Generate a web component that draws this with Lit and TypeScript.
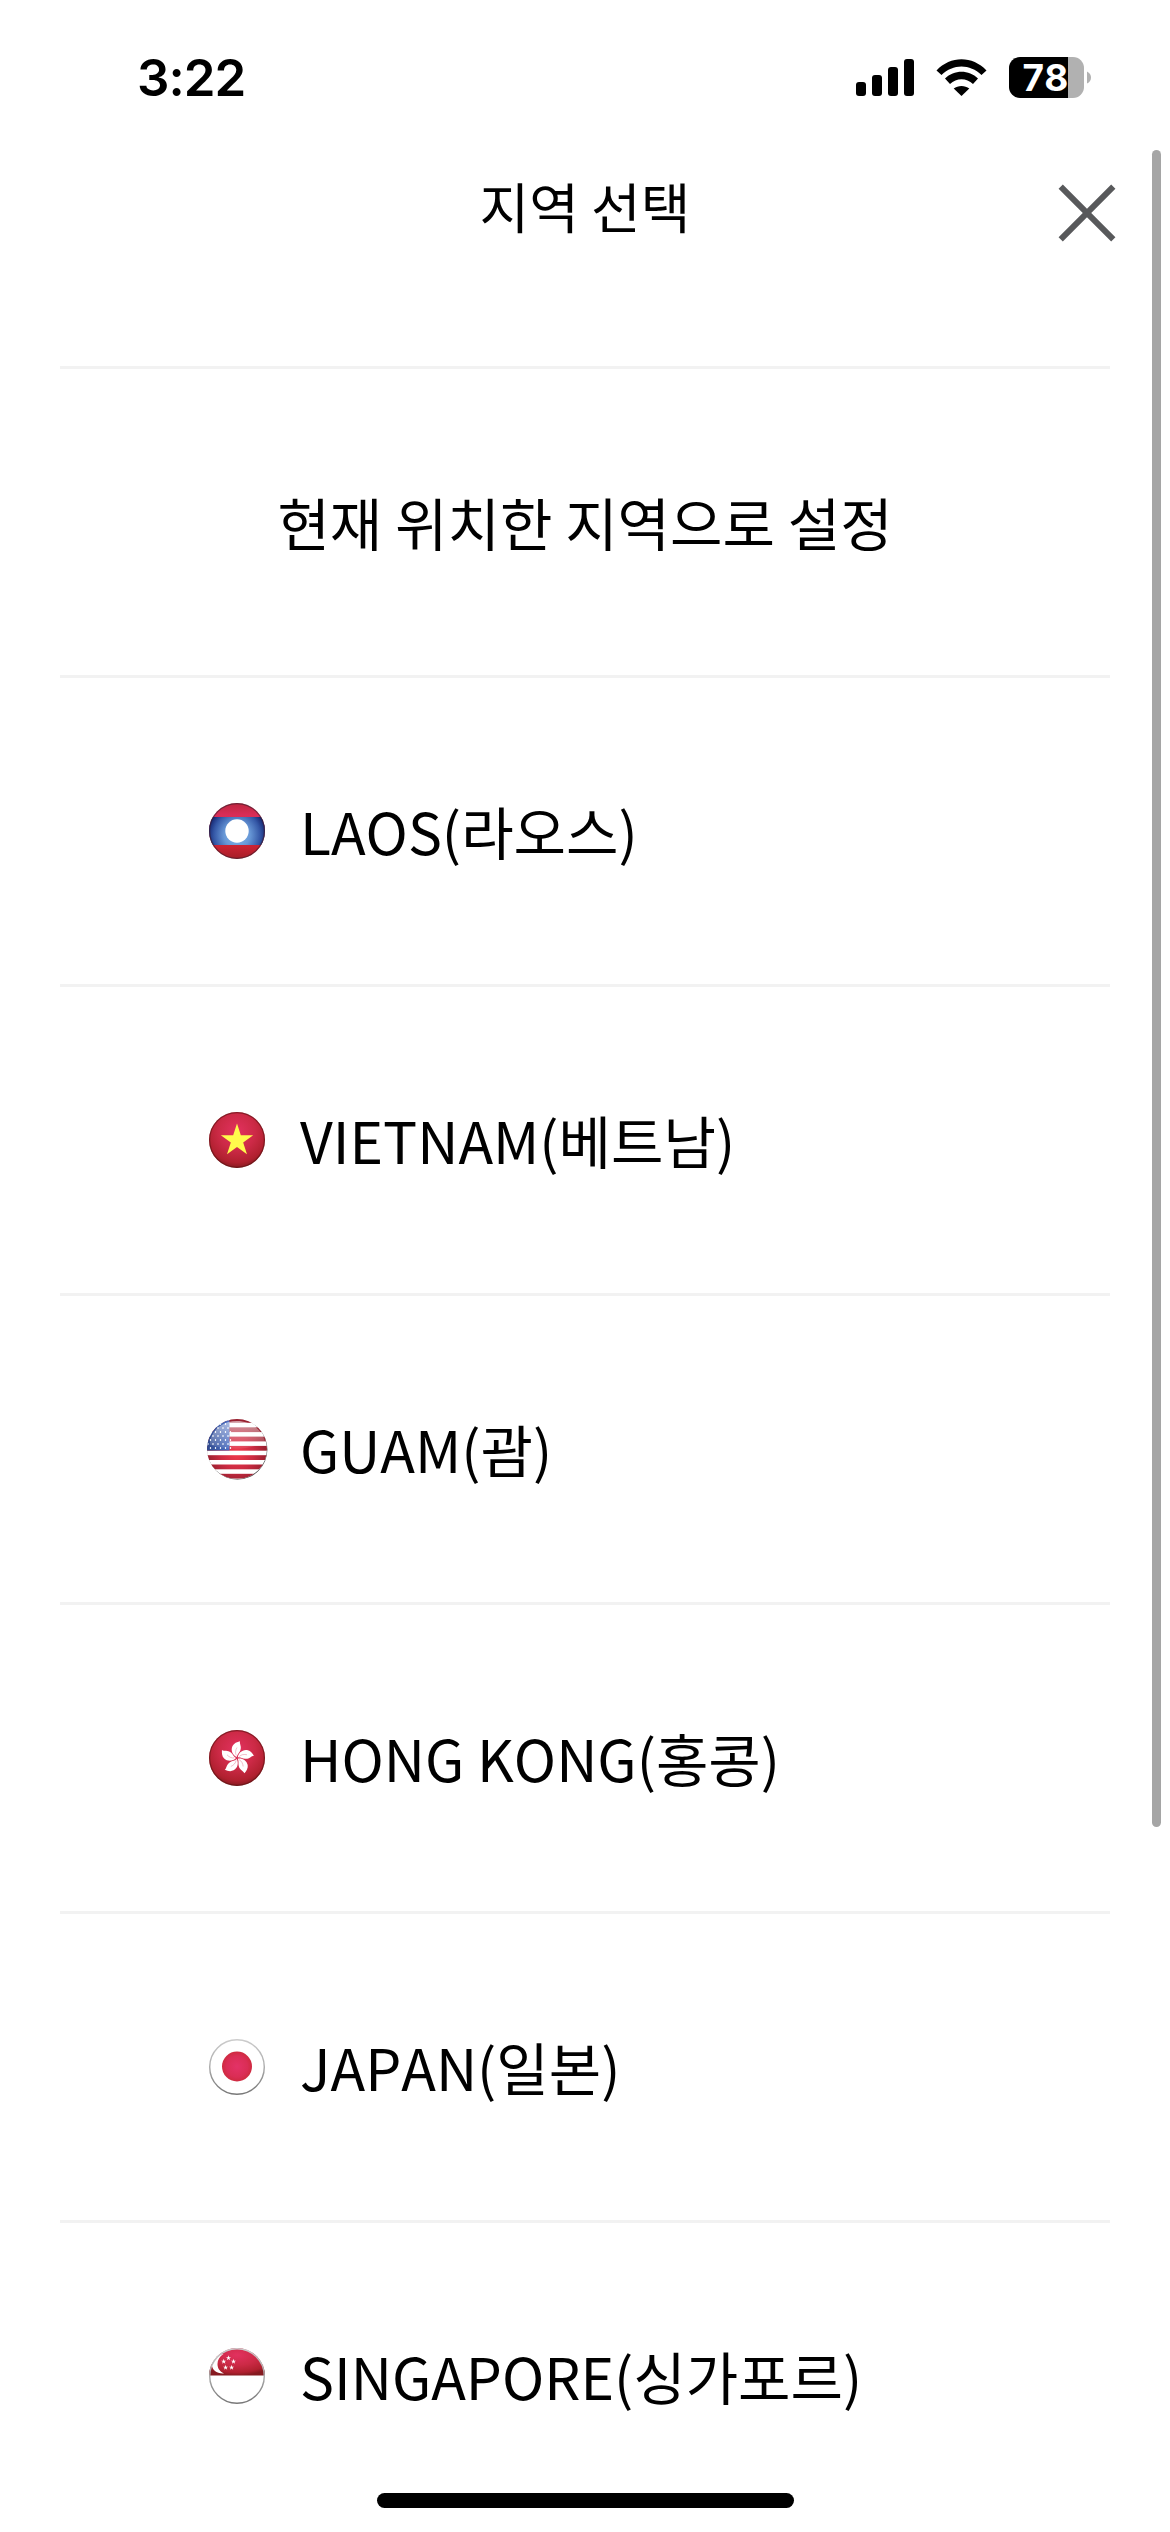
import { LitElement, html, css, svg, TemplateResult } from "lit";
import { customElement, property } from "lit/decorators.js";

type FlagCode = "la" | "vn" | "us" | "hk" | "jp" | "sg";

interface Region {
  code: FlagCode;
  name: string;
}

const REGIONS: Region[] = [
  { code: "la", name: "LAOS(라오스)" },
  { code: "vn", name: "VIETNAM(베트남)" },
  { code: "us", name: "GUAM(괌)" },
  { code: "hk", name: "HONG KONG(홍콩)" },
  { code: "jp", name: "JAPAN(일본)" },
  { code: "sg", name: "SINGAPORE(싱가포르)" },
];

const starPoints = (cx: number, cy: number, r: number): string =>
  Array.from({ length: 10 }, (_, i) => {
    const radius = i % 2 ? r * 0.382 : r;
    const angle = (Math.PI / 5) * i - Math.PI / 2;
    return `${(cx + radius * Math.cos(angle)).toFixed(2)},${(cy + radius * Math.sin(angle)).toFixed(2)}`;
  }).join(" ");

const redBall = svg`<circle cx="32" cy="32" r="28" fill="url(#red)"/>`;

// Every flag is a ball in the middle of a 64 by 64 box.
const FLAGS: Record<FlagCode, () => TemplateResult> = {
  la: () => svg`
    <g clip-path="url(#ball)">
      <rect width="64" height="64" fill="url(#redv)"/>
      <rect y="18" width="64" height="28" fill="url(#blue)"/>
    </g>
    <circle cx="32" cy="32" r="11.7" fill="#fff"/>
    <circle cx="32" cy="32" r="27.4" fill="none" stroke="#3c1c2c" stroke-opacity=".6" stroke-width="1.2"/>`,
  vn: () => svg`
    ${redBall}
    <polygon points="${starPoints(32, 32.5, 17)}" fill="#fffb4c"/>
    <circle cx="32" cy="32" r="27.4" fill="none" stroke="#5a1010" stroke-opacity=".6" stroke-width="1.2"/>`,
  us: () => svg`
    <circle cx="32.4" cy="32.6" r="30" fill="#444"/>
    <g clip-path="url(#bigball)">
      <rect width="64" height="64" fill="#fff"/>
      ${Array.from({ length: 7 }, (_, i) => svg`<rect y="${1 + i * 9.3}" width="64" height="4.8" fill="url(#stripe)"/>`)}
      <rect width="24.5" height="33.5" fill="url(#canton)"/>
      ${Array.from({ length: 8 }, (_, r) =>
        Array.from({ length: 5 }, (_, c) => svg`<ellipse cx="${3 + c * 5 + (r % 2) * 2.5}" cy="${3 + r * 4}" rx=".7" ry="1.1" fill="#fff"/>`)
      )}
      <path d="M5 24C8 11 19 4 32 4s25 8 28 21C44 34 22 33 5 28z" fill="url(#gloss)"/>
    </g>`,
  hk: () => svg`
    ${redBall}
    ${[0, 72, 144, 216, 288].map(
      (a) => svg`
      <g transform="rotate(${a} 32 32)">
        <path d="M31.7 31C28 29.5 25.3 24.5 27.5 20C29 17 32 16 35 15.2C34.3 18 37 20.5 35.3 24.5C34 27.5 32.3 28 31.7 31Z" fill="#fff"/>
        <path d="M31.3 29.5C30 27 30.5 24 32 21.5" fill="none" stroke="#d12d55" stroke-opacity=".4" stroke-width=".7"/>
      </g>`
    )}
    <circle cx="32" cy="32" r="27.4" fill="none" stroke="#5a1010" stroke-opacity=".6" stroke-width="1.2"/>`,
  jp: () => svg`
    <circle cx="32" cy="32" r="27.3" fill="#fff" stroke="url(#rim)" stroke-width="1.4"/>
    <circle cx="32" cy="31.5" r="15" fill="url(#sun)"/>`,
  sg: () => svg`
    <g clip-path="url(#ball)">
      <rect width="64" height="64" fill="#fff"/>
      <rect width="64" height="31.5" fill="url(#red)"/>
      <path d="M18.5 10C10 11 7 16 7 21c0 5 5 9 12 8.5C14 27 12.5 23.5 12.5 20c0-4 2-7.500 6-10z" fill="#fff"/>
      ${[[23.5, 14], [18.7, 17.5], [28.5, 17.5], [20.6, 23.5], [26.6, 23.5]].map(
        ([x, y]) => svg`<polygon points="${starPoints(x, y, 2.7)}" fill="#fff"/>`
      )}
    </g>
    <circle cx="32" cy="32" r="27.3" fill="none" stroke="url(#rim)" stroke-width="1.4"/>`,
};

@customElement("region-flag")
export class RegionFlag extends LitElement {
  @property() code: FlagCode = "la";

  static styles = css`
    :host { display: block; width: 64px; height: 64px; }
    .flag { display: block; width: 64px; height: 64px; }
  `;

  render() {
    return html`
      <svg class="flag" viewBox="0 0 64 64" aria-hidden="true">
        <defs>
          <clipPath id="ball"><circle cx="32" cy="32" r="28"/></clipPath>
          <clipPath id="bigball"><circle cx="32" cy="32" r="30"/></clipPath>
          <radialGradient id="red" cx="50%" cy="35%" r="65%">
            <stop offset="0" stop-color="#e2315f"/><stop offset=".5" stop-color="#cc2a46"/>
            <stop offset=".85" stop-color="#b0202f"/><stop offset="1" stop-color="#851a20"/>
          </radialGradient>
          <linearGradient id="redv" x2="0" y2="1">
            <stop offset="0" stop-color="#b52335"/><stop offset=".25" stop-color="#d92d58"/>
            <stop offset=".75" stop-color="#c92232"/><stop offset="1" stop-color="#981d24"/>
          </linearGradient>
          <radialGradient id="blue" gradientUnits="userSpaceOnUse" cx="32" cy="36" r="29">
            <stop offset="0" stop-color="#88bdf0"/><stop offset=".45" stop-color="#6797d6"/>
            <stop offset=".8" stop-color="#3457a6"/><stop offset="1" stop-color="#172974"/>
          </radialGradient>
          <radialGradient id="stripe" gradientUnits="userSpaceOnUse" cx="32" cy="36" r="30">
            <stop offset="0" stop-color="#f23a4c"/><stop offset=".55" stop-color="#cc2b42"/><stop offset="1" stop-color="#98202f"/>
          </radialGradient>
          <linearGradient id="canton">
            <stop offset="0" stop-color="#2c4588"/><stop offset="1" stop-color="#4d70c4"/>
          </linearGradient>
          <linearGradient id="gloss" x2="0" y2="1">
            <stop offset="0" stop-color="#fff" stop-opacity=".55"/><stop offset="1" stop-color="#fff" stop-opacity=".08"/>
          </linearGradient>
          <radialGradient id="sun">
            <stop offset="0" stop-color="#e33267"/><stop offset=".7" stop-color="#da2d55"/><stop offset="1" stop-color="#ce2a3f"/>
          </radialGradient>
          <linearGradient id="rim" x2="0" y2="1">
            <stop offset="0" stop-color="#ccc"/><stop offset=".5" stop-color="#aaa"/><stop offset="1" stop-color="#777"/>
          </linearGradient>
        </defs>
        ${FLAGS[this.code]()}
      </svg>`;
  }
}

@customElement("status-bar")
export class StatusBar extends LitElement {
  static styles = css`
    :host {
      display: flex; justify-content: space-between; align-items: center;
      box-sizing: border-box; height: 141px; padding: 0 79px 0 137px;
    }
    .time {
      font: 600 51px/64px Inter, "Liberation Sans", sans-serif;
      letter-spacing: -1px; padding-top: 14px;
    }
    .icons { display: flex; gap: 22px; padding-top: 14px; }
    .icon { display: block; }
    .level { font: 700 37px/1 Inter, "Liberation Sans", sans-serif; letter-spacing: 0.8px; }
  `;

  render() {
    return html`
      <span class="time">3:22</span>
      <span class="icons">
        <svg class="icon" width="58" height="41" viewBox="0 0 58 41">
          <rect x="0" y="25" width="10" height="14" rx="3"/>
          <rect x="16" y="18" width="10" height="21" rx="3"/>
          <rect x="32" y="10" width="10" height="29" rx="3"/>
          <rect x="48" y="2" width="10" height="37" rx="3"/>
        </svg>
        <svg class="icon" width="51" height="41" viewBox="0 0 51 41">
          <path d="M.5 13.5C14.5-1.5 36.5-1.5 50.5 13.5L45.5 18C34 6.5 17 6.5 5.5 18Z"/>
          <path d="M9 21.5C18 12.5 33 12.5 42 21.5L37 27C30.5 20.5 20.5 20.5 14 27Z"/>
          <path d="M17.7 31.5C22 28 29 28 33.3 31.5L25.5 39Z"/>
        </svg>
        <svg class="icon" width="82" height="41" viewBox="0 0 82 41">
          <path d="M59 0H64a11 11 0 0 1 11 11V30a11 11 0 0 1-11 11H59Z" fill="#b1b1b1"/>
          <path d="M59 0H11A11 11 0 0 0 0 11V30A11 11 0 0 0 11 41H59Z"/>
          <path d="M78 14.5Q82 16.5 82 20.5T78 26.5Z" fill="#b1b1b1"/>
          <text class="level" x="13.5" y="34" fill="#fff">78</text>
        </svg>
      </span>`;
  }
}

@customElement("app-root")
export class AppRoot extends LitElement {
  static styles = css`
    :host {
      display: block; position: relative; box-sizing: border-box;
      width: 1170px; height: 2532px; overflow: hidden;
      background: #fff; color: #000;
      font-family: "Noto Sans CJK KR", sans-serif;
      font-kerning: none;
    }
    .header {
      display: grid; grid-template-columns: 1fr auto 1fr;
      box-sizing: border-box; height: 225px; padding: 25px 54px 0;
    }
    .title { grid-column: 2; margin: 0; font-weight: 400; font-size: 54px; line-height: 80px; }
    .close {
      justify-self: end; align-self: start; margin-top: 18px; padding: 0;
      border: 0; background: none; width: 58px; height: 58px;
    }
    .cross { display: block; }
    .list { list-style: none; margin: 0 60px; padding: 0; }
    .row {
      display: flex; align-items: center; box-sizing: border-box;
      height: 309px; border-top: 3px solid #f2f2f2; padding-left: 145px;
      font-size: 57px; line-height: 84px; white-space: nowrap;
    }
    .current { justify-content: center; padding-left: 0; }
    .label { padding-bottom: 3px; }
    .flag { margin-right: 31px; }
    .scrollbar {
      position: absolute; left: 1152px; top: 150px; width: 9px; height: 1677px;
      border-radius: 5px; background: #a5a5a5;
    }
    .home {
      position: absolute; left: 377px; top: 2493px; width: 417px; height: 15px;
      border-radius: 8px; background: #000;
    }
  `;

  render() {
    return html`
      <status-bar></status-bar>
      <header class="header">
        <h1 class="title">지역 선택</h1>
        <button class="close" aria-label="닫기">
          <svg class="cross" width="58" height="58" viewBox="0 0 58 58">
            <path d="M2.7 2.7L55.3 55.3M55.3 2.7L2.7 55.3" stroke="#58595b" stroke-width="6" fill="none"/>
          </svg>
        </button>
      </header>
      <ul class="list">
        <li class="row current"><span class="label">현재 위치한 지역으로 설정</span></li>
        ${REGIONS.map(
          (r) => html`
            <li class="row">
              <region-flag class="flag" code=${r.code}></region-flag>
              <span class="label">${r.name}</span>
            </li>`
        )}
      </ul>
      <div class="scrollbar"></div>
      <div class="home"></div>`;
  }
}
